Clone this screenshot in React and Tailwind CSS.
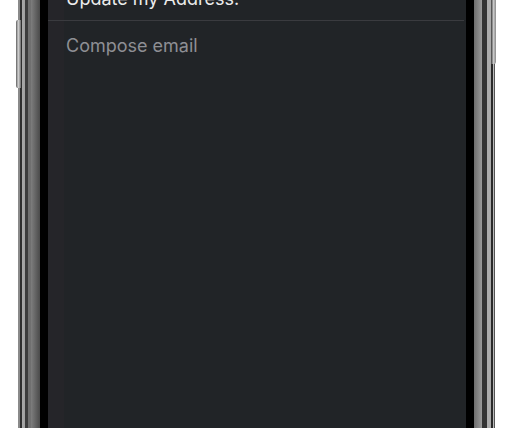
export default function App() {
  return (
    <div className="relative w-[514px] h-[428px] bg-white overflow-hidden flex" style={{ fontFamily: "Inter, 'Noto Sans', sans-serif" }}>
      {/* left side button */}
      <div className="absolute left-[16px] top-[20px] w-[5px] h-[68px] rounded-l-[2px] bg-[linear-gradient(to_right,#9a9a9a,#cfcfcf_40%,#6a6a6a)] border-l border-[#777]" />
      {/* right side button */}
      <div className="absolute left-[491px] top-[-10px] w-[5px] h-[74px] rounded-r-[2px] bg-[linear-gradient(to_right,#3a3a3a,#c8c8c8_50%,#8a8a8a)]" />
      <div className="ml-[18px] w-[477px] h-full flex">
        {/* left frame */}
        <div className="w-[22px] h-full bg-[linear-gradient(to_right,#8a8a8a_0px,#8a8a8a_2px,#2e2e2e_2px,#2e2e2e_4px,#a8a8a8_4px,#a0a0a0_7px,#3c3c3c_7px,#3c3c3c_10px,#707070_10px,#707070_13px,#7e7e7e_13px,#4a4a4a_22px)]" />
        <div className="w-[8px] h-full bg-black" />
        {/* screen */}
        <div className="flex-1 h-full bg-[#212427] relative flex flex-col">
          <div className="absolute left-0 top-0 bottom-0 w-[16px] bg-[#252529]" />
          <div className="relative mt-[-12px] pl-[18px] pb-[10px] mr-[2px] border-b border-[#3a3b3f] text-[18px] leading-[22px] text-[#ececec]">
            Update my Address.
          </div>
          <div className="relative pl-[18px] pt-[14px] text-[18px] leading-[22px] text-[#8e8f94]">
            Compose email
          </div>
        </div>
        <div className="w-[8px] h-full bg-black" />
        {/* right frame */}
        <div className="w-[21px] h-full bg-[linear-gradient(to_right,#6e6e6e_0px,#9a9a9a_8px,#333_8px,#333_13px,#ababab_13px,#ababab_17px,#2a2a2a_17px,#2a2a2a_19px,#bbbbbb_19px,#bbbbbb_20px,#555_20px)]" />
      </div>
    </div>
  );
}
